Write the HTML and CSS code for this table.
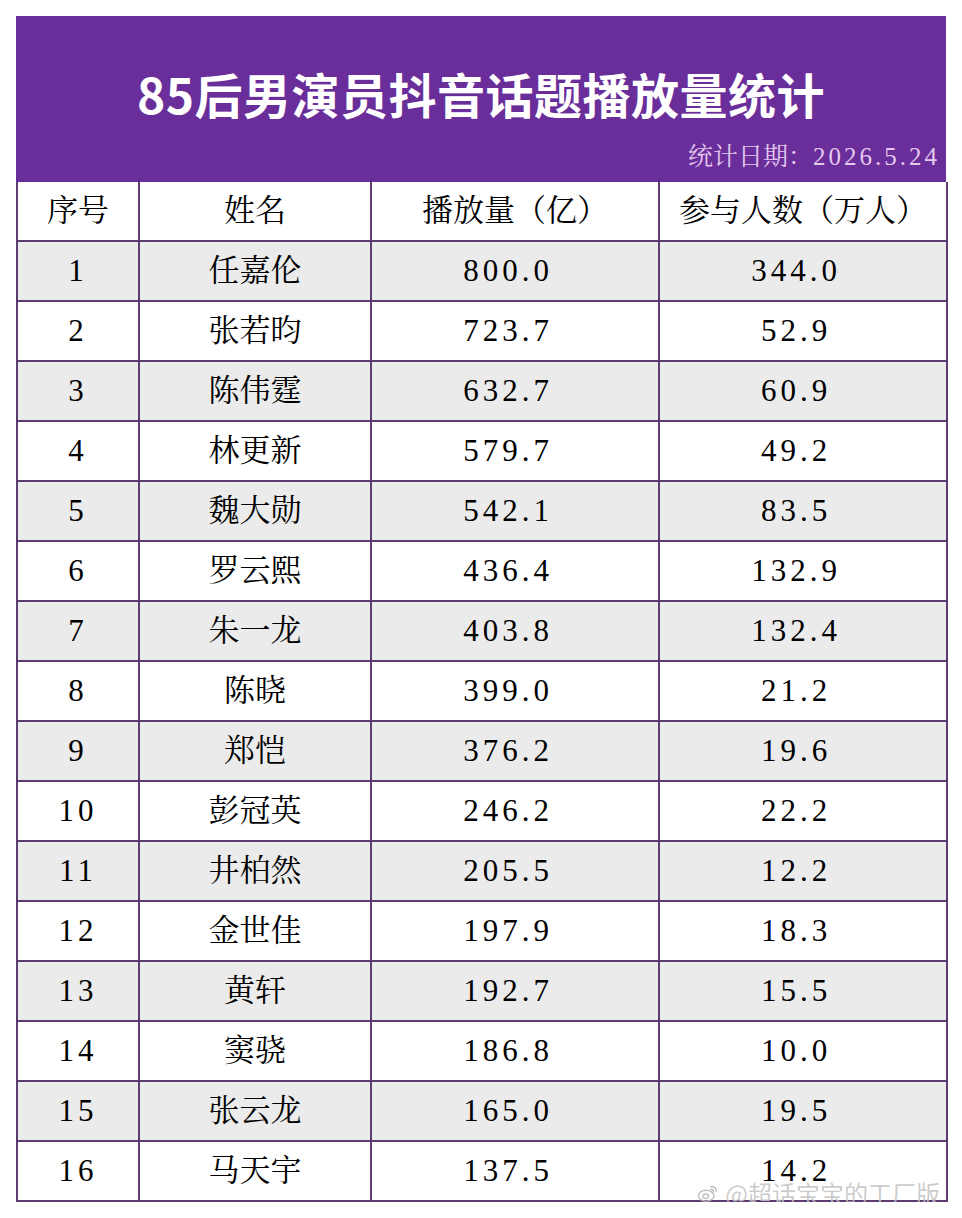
FILE: index.html
```html
<!DOCTYPE html>
<html lang="zh-CN">
<head>
<meta charset="utf-8">
<link rel="stylesheet" href="styles.css">
</head>
<body>
<div class="sheet">
  <div class="banner">
    <h1 class="title">85后男演员抖音话题播放量统计</h1>
    <div class="date">统计日期：<span class="num">2026.5.24</span></div>
  </div>
  <table class="grid">
    <colgroup>
      <col class="c1"><col class="c2"><col class="c3"><col class="c4">
    </colgroup>
    <thead>
      <tr><th>序号</th><th>姓名</th><th>播放量（亿）</th><th>参与人数（万人）</th></tr>
    </thead>
    <tbody>
      <tr class="alt"><td class="num">1</td><td>任嘉伦</td><td class="num val">800.0</td><td class="num val">344.0</td></tr>
      <tr><td class="num">2</td><td>张若昀</td><td class="num val">723.7</td><td class="num val">52.9</td></tr>
      <tr class="alt"><td class="num">3</td><td>陈伟霆</td><td class="num val">632.7</td><td class="num val">60.9</td></tr>
      <tr><td class="num">4</td><td>林更新</td><td class="num val">579.7</td><td class="num val">49.2</td></tr>
      <tr class="alt"><td class="num">5</td><td>魏大勋</td><td class="num val">542.1</td><td class="num val">83.5</td></tr>
      <tr><td class="num">6</td><td>罗云熙</td><td class="num val">436.4</td><td class="num val">132.9</td></tr>
      <tr class="alt"><td class="num">7</td><td>朱一龙</td><td class="num val">403.8</td><td class="num val">132.4</td></tr>
      <tr><td class="num">8</td><td>陈晓</td><td class="num val">399.0</td><td class="num val">21.2</td></tr>
      <tr class="alt"><td class="num">9</td><td>郑恺</td><td class="num val">376.2</td><td class="num val">19.6</td></tr>
      <tr><td class="num">10</td><td>彭冠英</td><td class="num val">246.2</td><td class="num val">22.2</td></tr>
      <tr class="alt"><td class="num">11</td><td>井柏然</td><td class="num val">205.5</td><td class="num val">12.2</td></tr>
      <tr><td class="num">12</td><td>金世佳</td><td class="num val">197.9</td><td class="num val">18.3</td></tr>
      <tr class="alt"><td class="num">13</td><td>黄轩</td><td class="num val">192.7</td><td class="num val">15.5</td></tr>
      <tr><td class="num">14</td><td>窦骁</td><td class="num val">186.8</td><td class="num val">10.0</td></tr>
      <tr class="alt"><td class="num">15</td><td>张云龙</td><td class="num val">165.0</td><td class="num val">19.5</td></tr>
      <tr><td class="num">16</td><td>马天宇</td><td class="num val">137.5</td><td class="num val">14.2</td></tr>
    </tbody>
  </table>
  <div class="watermark">
    <svg class="wb" viewBox="0 0 24 24" width="26" height="22"><ellipse cx="10" cy="15" rx="8.5" ry="6" fill="none" stroke="currentColor" stroke-width="1.6"/><ellipse cx="9.5" cy="15.5" rx="3.2" ry="2.4" fill="none" stroke="currentColor" stroke-width="1.4"/><path d="M15 5a5 5 0 0 1 6 5M15 8a2.5 2.5 0 0 1 3 2.5" fill="none" stroke="currentColor" stroke-width="1.6" stroke-linecap="round"/></svg>
    <span>@超话宝宝的工厂版</span>
  </div>
</div>
</body>
</html>
```

FILE: styles.css
```css
html, body {
  margin: 0;
  padding: 0;
  background: #ffffff;
}

.sheet {
  position: relative;
  width: 930px;
  margin: 16px 0 0 16px;
  font-family: "Liberation Serif", "Noto Serif CJK SC", "Noto Sans CJK SC", serif;
  color: #000000;
}

.banner {
  background: #6a2e9b;
  height: 166px;
  display: flex;
  flex-direction: column;
  box-sizing: border-box;
  padding-top: 48px;
}

.title {
  margin: 0;
  text-align: center;
  font-family: "Noto Sans CJK SC", "Noto Sans", sans-serif;
  font-weight: 700;
  font-size: 48px;
  line-height: 58px;
  color: #ffffff;
  letter-spacing: 0.5px;
}

.date {
  margin-top: auto;
  margin-bottom: 10px;
  align-self: flex-end;
  padding-right: 6px;
  font-size: 25px;
  line-height: 30px;
  color: #e3c9ee;
}

.date .num {
  letter-spacing: 3px;
}

.grid {
  width: 930px;
  border-collapse: collapse;
  table-layout: fixed;
}

.c1 { width: 122px; }
.c2 { width: 232px; }
.c3 { width: 288px; }
.c4 { width: 288px; }

.grid th,
.grid td {
  border: 2px solid #5c3c72;
  height: 58px;
  padding: 0;
  text-align: center;
  vertical-align: middle;
  font-size: 31px;
  font-weight: 400;
  line-height: 58px;
}

.grid thead th {
  background: #ffffff;
  border-top: none;
}

.grid tr.alt td {
  background: #ebebeb;
}

.grid td.num {
  letter-spacing: 4px;
  font-size: 31px;
}

.grid td.val {
  padding-right: 14px;
}

.watermark {
  position: absolute;
  right: 6px;
  bottom: -6px;
  display: flex;
  align-items: center;
  gap: 4px;
  color: rgba(195, 195, 195, 0.85);
  font-family: "Noto Sans CJK SC", sans-serif;
  font-size: 24px;
  line-height: 30px;
}

.watermark .wb {
  color: rgba(185, 185, 185, 0.9);
}
```
